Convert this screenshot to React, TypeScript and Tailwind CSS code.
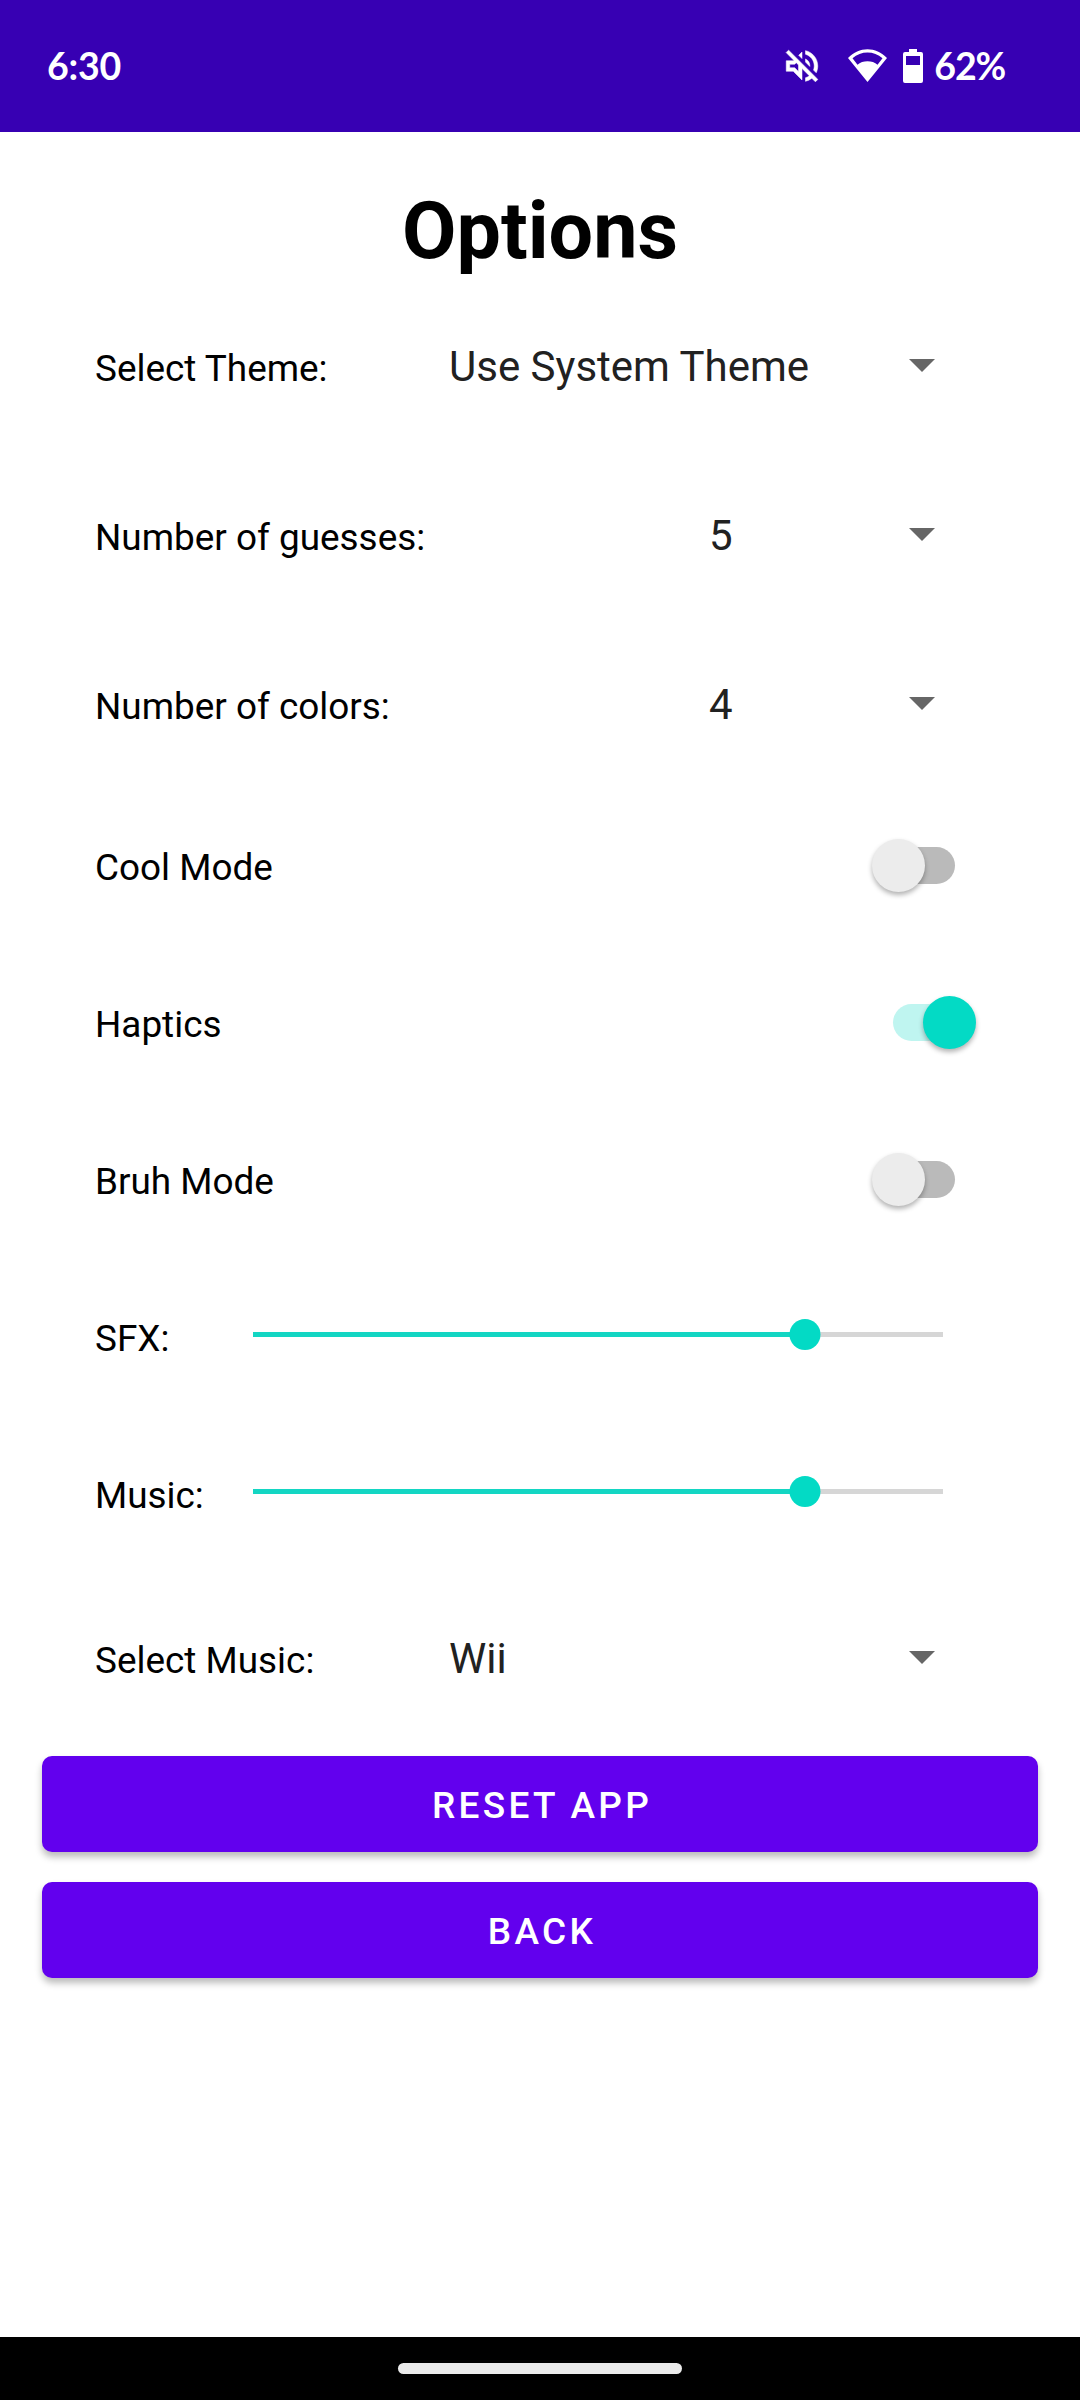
import React from 'react';

function StatusBar() {
  return (
    <header className="flex h-[132px] shrink-0 items-center bg-[#3700b3] pl-[47px] pr-[75px] text-white">
      <span className="font-['Lato',sans-serif] text-[37.5px] leading-[44px] font-bold tracking-[-0.2px]">6:30</span>
      <div className="ml-auto flex items-center">
        <svg className="mr-[25px] h-[42px] w-[42px]" viewBox="0 0 24 24" fill="currentColor" stroke="currentColor" strokeWidth="0.3">
          <path d="M4.34 2.93L2.93 4.34 7.29 8.7 7 9H3v6h4l5 5v-6.59l4.18 4.18c-.65.49-1.38.88-2.18 1.11v2.06a8.94 8.94 0 0 0 3.61-1.75l2.05 2.05 1.41-1.41L4.34 2.93zM10 15.17L7.83 13H5v-2h2.83l.88-.88L10 11.41v3.76zM19 12c0 .82-.15 1.61-.41 2.34l1.53 1.53c.56-1.17.88-2.48.88-3.87 0-4.28-2.99-7.86-7-8.77v2.06c2.89.86 5 3.54 5 6.71zm-7-8l-1.88 1.88L12 7.76zm4.5 8A4.5 4.5 0 0 0 14 7.97v1.79l2.48 2.48c.01-.08.02-.16.02-.24z" />
        </svg>
        <svg className="mr-[16px] h-[34px] w-[39px]" viewBox="0 0 39 34" fill="currentColor">
          <path fillRule="evenodd" d="M0 9C11-2.7 28-2.7 39 9L19.500 33ZM4.500 9.300L9.500 15.800C14.500 11.200 24.500 11.200 29.500 15.800L34.500 9.300C26 1.500 13 1.500 4.500 9.300Z" />
        </svg>
        <svg className="mr-[11px] h-[34px] w-[20px]" viewBox="0 0 20 34" fill="currentColor">
          <path fillRule="evenodd" d="M6 0h8v3h4q2 0 2 2v27q0 2-2 2H2q-2 0-2-2V5q0-2 2-2h4ZM3 7v9h14V7Z" />
        </svg>
        <span className="font-['Lato',sans-serif] text-[37.5px] leading-[44px] font-bold tracking-[-1.2px]">62%</span>
      </div>
    </header>
  );
}

function Label({ children }: { children: React.ReactNode }) {
  return <span className="whitespace-nowrap text-[36.9px] leading-[44px] text-black">{children}</span>;
}

function Select({ label, value, numeric = false }: { label: string; value: string; numeric?: boolean }) {
  return (
    <div className="flex h-[56px] items-end pr-[145px]">
      <div className="flex w-[354px] shrink-0">
        <Label>{label}</Label>
      </div>
      <span className={`text-[42px] leading-[48px] text-[#212121] ${numeric ? 'ml-[260px]' : ''}`}>{value}</span>
      <svg className="mb-[19px] ml-auto h-[13px] w-[26px]" viewBox="0 0 26 13">
        <path d="M0 0h26L13 13z" fill="#666" />
      </svg>
    </div>
  );
}

function Toggle({ label, on = false }: { label: string; on?: boolean }) {
  return (
    <div className="flex h-[157px] items-center justify-between pr-[125px]">
      <div className="pt-[4px]">
        <Label>{label}</Label>
      </div>
      <div className={`relative h-[37px] w-[62px] rounded-full ${on ? 'bg-[#bff5f0]' : 'bg-[#bababa]'}`}>
        <div className={`absolute top-[-8px] size-[53px] rounded-full shadow-[0_3px_5px_rgba(0,0,0,0.3)] ${on ? 'left-[30px] bg-[#03dac5]' : 'left-[-21px] bg-[#ececec]'}`} />
      </div>
    </div>
  );
}

function Slider({ label, value }: { label: string; value: number }) {
  return (
    <div className="flex h-[157px] items-center pr-[137px]">
      <div className="w-[158px] pt-[9px]">
        <Label>{label}</Label>
      </div>
      <div className="relative h-[5px] grow bg-[#d6d6d6]">
        <div className="h-full bg-[#13d6c3]" style={{ width: `${value}%` }} />
        <div className="absolute top-[-13px] size-[31px] -translate-x-1/2 rounded-full bg-[#03dac5]" style={{ left: `${value}%` }} />
      </div>
    </div>
  );
}

function Button({ children }: { children: React.ReactNode }) {
  return (
    <button className="flex h-[96px] items-center justify-center rounded-[10px] bg-[#6200ee] pt-[3px] pl-[4px] text-[37px] font-medium tracking-[3.3px] text-white shadow-[0_5px_7px_rgba(0,0,0,0.27)]">
      {children}
    </button>
  );
}

export default function App() {
  return (
    <main className="flex h-[2400px] w-[1080px] flex-col bg-white font-['Roboto',sans-serif]">
      <StatusBar />
      <h1 className="mt-[40px] h-[118px] text-center text-[79px] leading-[118px] font-bold">Options</h1>
      <section className="flex flex-col pl-[95px]">
        <div className="mt-[45px] flex flex-col gap-[113px]">
          <Select label="Select Theme:" value="Use System Theme" />
          <Select label="Number of guesses:" value="5" numeric />
          <Select label="Number of colors:" value="4" numeric />
        </div>
        <div className="mt-[58px]">
          <Toggle label="Cool Mode" />
          <Toggle label="Haptics" on />
          <Toggle label="Bruh Mode" />
        </div>
        <div className="-mt-[2px]">
          <Slider label="SFX:" value={80} />
          <Slider label="Music:" value={80} />
        </div>
        <div className="mt-[57px]">
          <Select label="Select Music:" value="Wii" />
        </div>
      </section>
      <div className="mx-[42px] mt-[73px] flex flex-col gap-[30px]">
        <Button>RESET APP</Button>
        <Button>BACK</Button>
      </div>
      <footer className="mt-auto flex h-[63px] justify-center bg-black pt-[26px]">
        <div className="h-[11px] w-[284px] rounded-full bg-[#ebebeb]" />
      </footer>
    </main>
  );
}
